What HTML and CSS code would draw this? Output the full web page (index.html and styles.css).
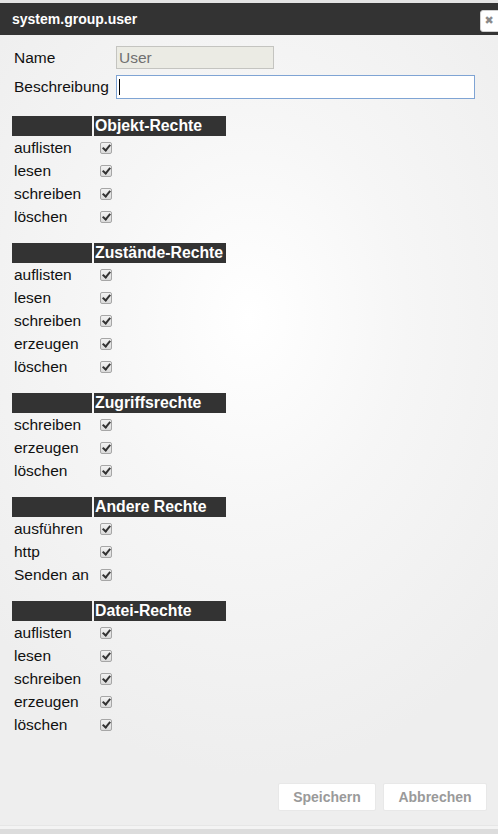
FILE: index.html
```html
<!DOCTYPE html>
<html lang="de">
<head>
<meta charset="utf-8">
<title>system.group.user</title>
<link rel="stylesheet" href="styles.css">
</head>
<body>
<div class="dialog">
  <div class="top-edge"></div>
  <div class="titlebar">
    <span class="title">system.group.user</span>
    <button class="close" type="button" aria-label="close">&#x2716;</button>
  </div>
  <div class="content">
    <div class="form">
      <label class="flabel">Name</label>
      <input class="name-input" type="text" value="User" disabled>
      <label class="flabel">Beschreibung</label>
      <span class="desc-wrap"><input class="desc-input" type="text" value=""><span class="caret"></span></span>
    </div>

    <div class="perm">
      <div class="ph"></div><div class="ph ph-title">Objekt-Rechte</div>
      <div class="pl">auflisten</div><div class="pc"><input type="checkbox" checked></div>
      <div class="pl">lesen</div><div class="pc"><input type="checkbox" checked></div>
      <div class="pl">schreiben</div><div class="pc"><input type="checkbox" checked></div>
      <div class="pl">löschen</div><div class="pc"><input type="checkbox" checked></div>
    </div>

    <div class="perm">
      <div class="ph"></div><div class="ph ph-title">Zustände-Rechte</div>
      <div class="pl">auflisten</div><div class="pc"><input type="checkbox" checked></div>
      <div class="pl">lesen</div><div class="pc"><input type="checkbox" checked></div>
      <div class="pl">schreiben</div><div class="pc"><input type="checkbox" checked></div>
      <div class="pl">erzeugen</div><div class="pc"><input type="checkbox" checked></div>
      <div class="pl">löschen</div><div class="pc"><input type="checkbox" checked></div>
    </div>

    <div class="perm">
      <div class="ph"></div><div class="ph ph-title">Zugriffsrechte</div>
      <div class="pl">schreiben</div><div class="pc"><input type="checkbox" checked></div>
      <div class="pl">erzeugen</div><div class="pc"><input type="checkbox" checked></div>
      <div class="pl">löschen</div><div class="pc"><input type="checkbox" checked></div>
    </div>

    <div class="perm">
      <div class="ph"></div><div class="ph ph-title">Andere Rechte</div>
      <div class="pl">ausführen</div><div class="pc"><input type="checkbox" checked></div>
      <div class="pl">http</div><div class="pc"><input type="checkbox" checked></div>
      <div class="pl">Senden an</div><div class="pc"><input type="checkbox" checked></div>
    </div>

    <div class="perm">
      <div class="ph"></div><div class="ph ph-title">Datei-Rechte</div>
      <div class="pl">auflisten</div><div class="pc"><input type="checkbox" checked></div>
      <div class="pl">lesen</div><div class="pc"><input type="checkbox" checked></div>
      <div class="pl">schreiben</div><div class="pc"><input type="checkbox" checked></div>
      <div class="pl">erzeugen</div><div class="pc"><input type="checkbox" checked></div>
      <div class="pl">löschen</div><div class="pc"><input type="checkbox" checked></div>
    </div>
  </div>
  <div class="footer">
    <button class="btn btn-save" type="button">Speichern</button>
    <button class="btn btn-cancel" type="button">Abbrechen</button>
  </div>
  <div class="bottom-edge"></div>
</div>
</body>
</html>
```

FILE: styles.css
```css
html, body {
  margin: 0;
  padding: 0;
  width: 498px;
  height: 834px;
  overflow: hidden;
}

body {
  font-family: "Liberation Sans", Arial, sans-serif;
  color: #111;
}

.dialog {
  width: 498px;
  height: 834px;
  display: flex;
  flex-direction: column;
  background: radial-gradient(ellipse 70% 55% at 50% 38%, #ffffff 0%, #f6f6f6 45%, #eeeeee 100%);
}

.top-edge {
  height: 3px;
  background: #e4e4e4;
}

.titlebar {
  position: relative;
  height: 32px;
  background: #333333;
  display: flex;
  align-items: center;
  padding-left: 12px;
}

.title {
  color: #ffffff;
  font-weight: bold;
  font-size: 14px;
}

.close {
  position: absolute;
  right: -6px;
  top: 7px;
  width: 24px;
  height: 22px;
  padding: 0 6px 0 0;
  background: #ffffff;
  border: 1px solid #cfcfcf;
  border-radius: 3px;
  color: #8a8a8a;
  font-size: 11px;
  font-family: "DejaVu Sans", sans-serif;
  line-height: 20px;
  text-align: center;
}

.content {
  flex: 1;
  padding: 11px 0 0 12px;
}

.form {
  display: grid;
  grid-template-columns: 104px auto;
  row-gap: 6px;
  align-items: center;
  justify-content: start;
  margin-bottom: 17px;
}

.flabel {
  font-size: 15.5px;
  padding-left: 2px;
}

.name-input {
  box-sizing: border-box;
  width: 158px;
  height: 23px;
  margin: 0;
  padding: 0 2px;
  border: 1px solid #c4c4c0;
  background: #ebebe4;
  color: #707070;
  font-family: "Liberation Sans", Arial, sans-serif;
  font-size: 15.5px;
}

.desc-wrap {
  position: relative;
  display: block;
  width: 359px;
  height: 24px;
}

.desc-input {
  box-sizing: border-box;
  width: 359px;
  height: 24px;
  margin: 0;
  padding: 0 2px;
  border: 1px solid #7fa4d4;
  background: #ffffff;
  font-family: "Liberation Sans", Arial, sans-serif;
  font-size: 15.5px;
  outline: none;
  caret-color: transparent;
}

.caret {
  position: absolute;
  left: 3px;
  top: 4px;
  width: 1px;
  height: 16px;
  background: #000;
}

.perm {
  display: grid;
  grid-template-columns: 80px 132px;
  column-gap: 2px;
  grid-auto-rows: 23px;
  margin-bottom: 15px;
}

.ph {
  height: 20px;
  background: #333333;
}

.ph-title {
  color: #ffffff;
  font-weight: bold;
  font-size: 15.8px;
  line-height: 20px;
  padding-left: 1px;
  white-space: nowrap;
}

.perm > .ph {
  align-self: start;
}

.perm {
  grid-template-rows: 20px;
}

.pl {
  font-size: 15.5px;
  line-height: 23px;
  padding-left: 2px;
  white-space: nowrap;
}

.pc {
  display: flex;
  align-items: center;
}

.pc input {
  appearance: none;
  -webkit-appearance: none;
  position: relative;
  box-sizing: border-box;
  width: 12px;
  height: 12px;
  margin: 0 0 0 6px;
  border: 1px solid #a6a6a6;
  border-radius: 2px;
  background: linear-gradient(#f2f2f2, #dadada);
}

.pc input::after {
  content: "";
  position: absolute;
  left: 3px;
  top: 0px;
  width: 3px;
  height: 6px;
  border: solid #333;
  border-width: 0 2px 2px 0;
  transform: rotate(40deg);
}

.footer {
  display: flex;
  justify-content: flex-end;
  gap: 7px;
  padding: 0 11px 14px 0;
}

.btn {
  box-sizing: border-box;
  height: 28px;
  margin: 0;
  padding: 0;
  background: #ffffff;
  border: 1px solid #e8e8e8;
  border-radius: 2px;
  color: #9a9a9a;
  font-family: "Liberation Sans", Arial, sans-serif;
  font-weight: bold;
  font-size: 14px;
}

.btn-save {
  width: 98px;
}

.btn-cancel {
  width: 104px;
}

.bottom-edge {
  height: 9px;
  box-sizing: border-box;
  border-top: 1px solid #e6e6e6;
  background: linear-gradient(#f3f3f3 3px, #dcdcdc 3px);
}
```
